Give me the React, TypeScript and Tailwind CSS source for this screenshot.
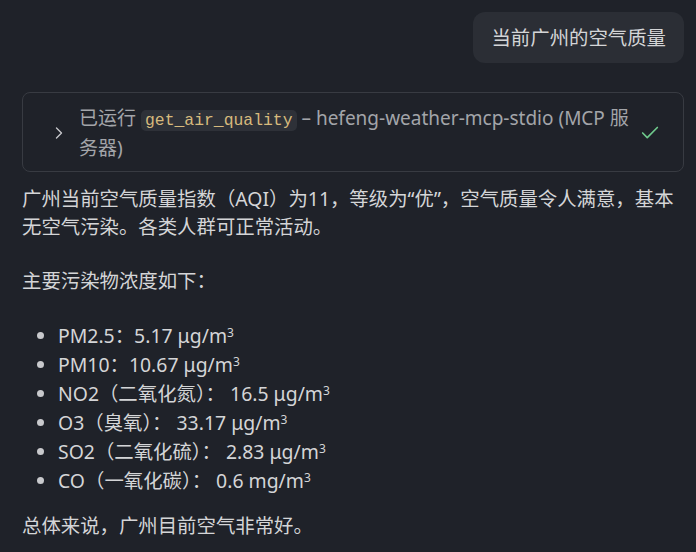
import { ChevronRight, Check } from "lucide-react";

const items = [
  { label: "PM2.5：", value: "5.17 μg/m" },
  { label: "PM10：", value: "10.67 μg/m" },
  { label: "NO2（二氧化氮）： ", value: "16.5 μg/m" },
  { label: "O3（臭氧）： ", value: "33.17 μg/m" },
  { label: "SO2（二氧化硫）： ", value: "2.83 μg/m" },
  { label: "CO（一氧化碳）： ", value: "0.6 mg/m" },
];

export default function App() {
  return (
    <div
      className="min-h-[552px] bg-[#1f2229] pl-[22px] pr-[12px] pt-[12px] text-[19.4px] text-[#d4d5d7]"
      style={{ fontFamily: '"Noto Sans", "Noto Sans CJK SC", sans-serif' }}
    >
      <div className="flex justify-end">
        <div className="rounded-[12px] bg-[#2b2e35] px-[18px] py-[11px] leading-[29px]">
          当前广州的空气质量
        </div>
      </div>

      <div className="mt-[29px] flex items-center rounded-[8px] border border-[#383b42] pl-[26px] pr-[22px] pt-[10px] pb-[8px]">
        <ChevronRight className="h-[20px] w-[20px] shrink-0 text-[#c8c9cc]" strokeWidth={1.6} />
        <div className="ml-[10px] flex-1 text-[19px] text-[#a3a5a9] leading-[30px]">
          已运行{" "}
          <code
            className="rounded-[5px] bg-[#2e3138] px-[4px] py-[1px] text-[16.4px] leading-none text-[#d7ba7d]"
            style={{ fontFamily: '"Liberation Mono", "DejaVu Sans Mono", monospace' }}
          >
            get_air_quality
          </code>{" "}
          – hefeng-weather-mcp-stdio (MCP 服务器)
        </div>
        <Check className="ml-[2px] h-[22px] w-[22px] shrink-0 text-[#6fc98c]" strokeWidth={1.8} />
      </div>

      <p className="mt-[13px] leading-[28px]">
        广州当前空气质量指数（AQI）为11，等级为“优”，空气质量令人满意，基本无空气污染。各类人群可正常活动。
      </p>

      <p className="mt-[26px] leading-[28px]">主要污染物浓度如下：</p>

      <ul className="mt-[26px] list-disc pl-[36px] leading-[29px] marker:text-[#c8c9cc]">
        {items.map((it) => (
          <li key={it.label}>
            {it.label}
            {it.value}
            <sup className="text-[12px]">3</sup>
          </li>
        ))}
      </ul>

      <p className="mt-[17px] leading-[28px]">总体来说，广州目前空气非常好。</p>
    </div>
  );
}
